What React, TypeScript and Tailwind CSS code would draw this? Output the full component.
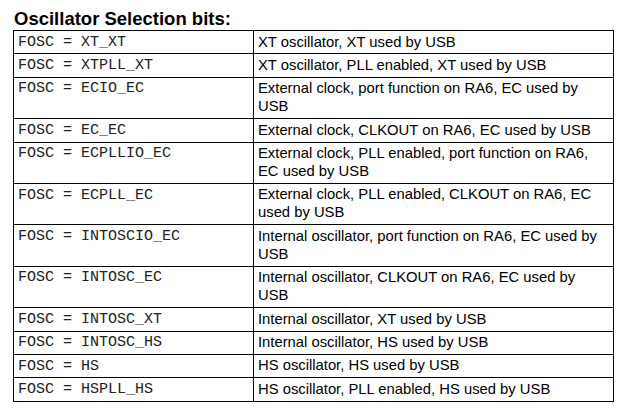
const rows: [string, string][] = [
  ['XT_XT', 'XT oscillator, XT used by USB'],
  ['XTPLL_XT', 'XT oscillator, PLL enabled, XT used by USB'],
  ['ECIO_EC', 'External clock, port function on RA6, EC used by USB'],
  ['EC_EC', 'External clock, CLKOUT on RA6, EC used by USB'],
  ['ECPLLIO_EC', 'External clock, PLL enabled, port function on RA6, EC used by USB'],
  ['ECPLL_EC', 'External clock, PLL enabled, CLKOUT on RA6, EC used by USB'],
  ['INTOSCIO_EC', 'Internal oscillator, port function on RA6, EC used by USB'],
  ['INTOSC_EC', 'Internal oscillator, CLKOUT on RA6, EC used by USB'],
  ['INTOSC_XT', 'Internal oscillator, XT used by USB'],
  ['INTOSC_HS', 'Internal oscillator, HS used by USB'],
  ['HS', 'HS oscillator, HS used by USB'],
  ['HSPLL_HS', 'HS oscillator, PLL enabled, HS used by USB'],
]

export default function App() {
  return (
    <div className="w-[630px] h-[413px] bg-white overflow-hidden font-['Liberation_Sans',Arial,sans-serif] text-black">
      {/* Heading */}
      <h2 className="ml-[14px] pt-[8px] text-[18.5px] leading-[21px] font-bold">
        Oscillator Selection bits:
      </h2>

      {/* Config table */}
      <table className="ml-[13px] mt-[1px] w-[601px] table-fixed border-collapse">
        <colgroup>
          <col className="w-[240px]" />
          <col />
        </colgroup>
        <tbody>
          {rows.map(([value, desc]) => (
            <tr key={value}>
              <td className="border border-black align-top pl-[4px] pr-[4px] pt-[2.6px] pb-[1.8px] font-['Liberation_Mono','Courier_New',monospace] text-[15px] leading-[18px] text-[#222] whitespace-pre">
                {`FOSC = ${value}`}
              </td>
              <td className="border border-black align-top pl-[4px] pr-[4px] pt-[1.5px] pb-[2.9px] text-[14.8px] leading-[18px]">
                {desc}
              </td>
            </tr>
          ))}
        </tbody>
      </table>
    </div>
  )
}
